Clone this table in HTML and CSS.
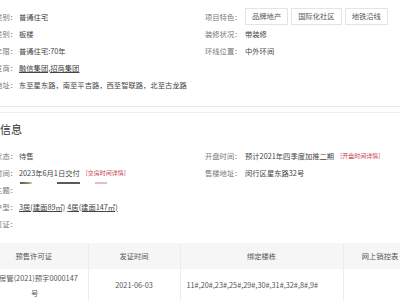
FILE: index.html
```html
<!DOCTYPE html>
<html lang="zh">
<head>
<meta charset="utf-8">
<link rel="stylesheet" href="styles.css">
</head>
<body>
<div class="page">
  <section class="info top">
    <div class="row">
      <div class="cell"><span class="lab">物业类别：</span><span class="val">普通住宅</span></div>
      <div class="cell right"><span class="lab">项目特色：</span><span class="val tags"><span class="tag">品牌地产</span><span class="tag">国际化社区</span><span class="tag">地铁沿线</span></span></div>
    </div>
    <div class="row">
      <div class="cell"><span class="lab">建筑类别：</span><span class="val">板楼</span></div>
      <div class="cell right"><span class="lab">装修状况：</span><span class="val">带装修</span></div>
    </div>
    <div class="row">
      <div class="cell"><span class="lab">产权年限：</span><span class="val">普通住宅:70年</span></div>
      <div class="cell right"><span class="lab">环线位置：</span><span class="val">中外环间</span></div>
    </div>
    <div class="row">
      <div class="cell wide"><span class="lab">开发商：</span><span class="val"><a class="ul">融信集团,招商集团</a></span></div>
    </div>
    <div class="row">
      <div class="cell wide"><span class="lab">楼盘地址：</span><span class="val">东至星东路，南至平吉路，西至智联路，北至古龙路</span></div>
    </div>
  </section>

  <div class="divider"></div>

  <h2 class="title">楼盘信息</h2>

  <section class="info bottom">
    <div class="row">
      <div class="cell"><span class="lab">销售状态：</span><span class="val">待售</span></div>
      <div class="cell right"><span class="lab">开盘时间：</span><span class="val">预计2021年四季度加推二期<a class="more">[开盘时间详情]</a></span></div>
    </div>
    <div class="row">
      <div class="cell"><span class="lab">交房时间：</span><span class="val">2023年6月1日交付<a class="more">[交房时间详情]</a></span></div>
      <div class="cell right"><span class="lab">售楼地址：</span><span class="val">闵行区星东路32号</span></div>
    </div>
    <div class="row">
      <div class="cell wide"><span class="lab">楼盘主题：</span><span class="val marks"><i class="mk m1"></i><i class="mk m2"></i><i class="mk m3"></i></span></div>
    </div>
    <div class="row">
      <div class="cell wide"><span class="lab">主力户型：</span><span class="val"><a class="ul">3居(建面89㎡)</a> <a class="ul">4居(建面147㎡)</a></span></div>
    </div>
    <div class="row">
      <div class="cell wide"><span class="lab">预售许可证：</span><span class="val"></span></div>
    </div>
  </section>

  <table class="permit">
    <thead>
      <tr><th class="c1">预售许可证</th><th class="c2">发证时间</th><th class="c3">绑定楼栋</th><th class="c4">网上销控表</th></tr>
    </thead>
    <tbody>
      <tr><td class="c1">沪房管(2021)预字0000147号</td><td class="c2">2021-06-03</td><td class="c3 left">11#,20#,23#,25#,29#,30#,31#,32#,8#,9#</td><td class="c4"></td></tr>
    </tbody>
  </table>
</div>
</body>
</html>
```
FILE: styles.css
```css
html, body {
  margin: 0;
  padding: 0;
  background: #fff;
  overflow: hidden;
}
.page {
  width: 400px;
  height: 300px;
  overflow: hidden;
  font-family: "Noto Sans CJK SC", "Liberation Sans", sans-serif;
  font-size: 7.3px;
  color: #444;
}
.info {
  margin-left: -43px;
}
.info.top {
  padding-top: 8px;
}
.row {
  display: flex;
  height: 17px;
  align-items: center;
}
.cell {
  display: flex;
  align-items: center;
  width: 248px;
  white-space: nowrap;
}
.cell.right {
  width: auto;
}
.cell.wide {
  width: auto;
}
.lab {
  width: 60px;
  padding-right: 2px;
  text-align: right;
  color: #777;
  flex: none;
}
.right .lab {
  width: 40px;
  padding-right: 0;
  text-align: left;
}
.val {
  display: flex;
  align-items: center;
}
.tags {
  gap: 3px;
}
.tag {
  border: 1px solid #e4e4e4;
  padding: 0 6px;
  height: 15px;
  line-height: 15px;
  color: #555;
}
.ul {
  text-decoration: underline;
  color: #444;
}
.ul + .ul {
  margin-left: 2px;
}
.more {
  color: #c8404a;
  font-size: 6px;
  margin-left: 6px;
}
.divider {
  margin-top: 13px;
  height: 5px;
  border-top: 1px solid #e8e8e8;
  border-bottom: 1px solid #ececec;
}
.title {
  margin: 9px 0 0 -22px;
  font-size: 11px;
  font-weight: normal;
  color: #333;
  height: 15px;
  line-height: 15px;
}
.info.bottom {
  margin-top: 10px;
}
.marks {
  position: relative;
  align-self: flex-start;
  height: 17px;
}
.mk {
  position: absolute;
  top: 1px;
  height: 2px;
}
.m1 { left: 1px; width: 12px; background: linear-gradient(90deg, #5c5c3c, #8f8f66 70%, #d8d8b8); }
.m2 { left: 38px; width: 23px; background: #5a5a5a; }
.m3 { left: 76px; width: 12px; background: #e6bccb; }
.permit {
  margin-top: 11px;
  margin-left: -20px;
  border-collapse: collapse;
  table-layout: fixed;
  width: 437px;
  color: #555;
}
.permit th, .permit td {
  box-sizing: border-box;
  border-right: 1px solid #ececec;
  text-align: center;
  font-weight: normal;
  padding: 0 6px;
  line-height: 15px;
}
.permit th {
  background: #f6f6f6;
  height: 26px;
  color: #555;
}
.permit td {
  height: 34px;
  border-bottom: 1px solid #ececec;
}
.permit td.c1 {
  padding: 0 8px 0 10px;
}
.permit td.left {
  text-align: left;
}
.c1 { width: 108px; }
.c2 { width: 92px; }
.c3 { width: 163px; }
.c4 { width: 74px; }
```
